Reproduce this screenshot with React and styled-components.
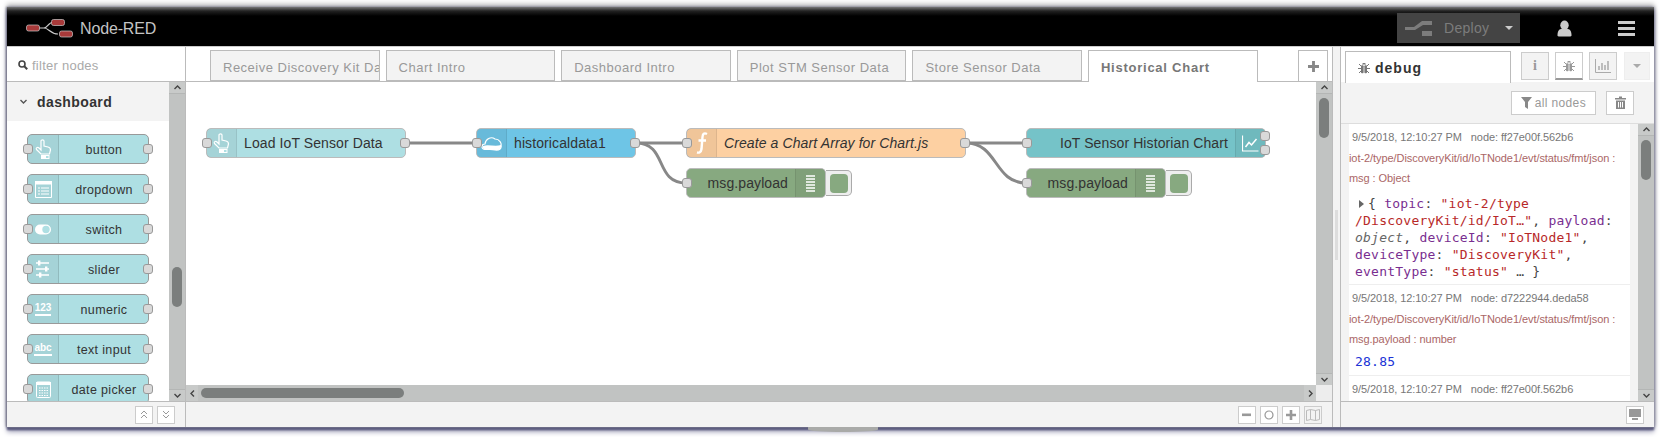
import React from 'react'
import styled, { createGlobalStyle } from 'styled-components'

const Global = createGlobalStyle`
  html, body { margin: 0; padding: 0; background: #fff; }
  body { font-family: "Liberation Sans", Arial, sans-serif; overflow: hidden; }
  * { box-sizing: border-box; }
`

const Page = styled.div`
  width: 1661px;
  height: 437px;
  padding: 7px 7px 10px 7px;
  overflow: hidden;
`
const Win = styled.div`
  width: 1647px;
  height: 420px;
  display: flex;
  flex-direction: column;
  background: #fff;
  box-shadow: -1px 0 2px #77778a, 1px 0 3px #9a9aa8, 0 3px 2px #4a4a72, 0 5px 5px #a5a5bc, 0 -3px 5px #bbb;
  position: relative;
`
const Dock = styled.div`
  position: absolute;
  left: 801px;
  top: 420px;
  width: 70px;
  height: 5px;
  background: #a9aaa8;
  border-radius: 0 0 50% 50%;
`
const Header = styled.div`
  height: 40px;
  flex: none;
  background: linear-gradient(#777 0, #222 4px, #000 9px);
  display: flex;
  align-items: center;
  padding-left: 19px;
  border-bottom: 1px solid #000;
`
const LogoBlock = styled.div`
  display: flex;
  align-items: center;
  margin-top: 4px;
`
const LogoText = styled.span`
  color: #c4c4c4;
  font-size: 16px;
  margin-left: 7px;
  letter-spacing: -0.15px;
`
const HeaderRight = styled.div`
  margin-left: auto;
  display: flex;
  align-items: center;
  height: 100%;
`
const DeployBtn = styled.div`
  width: 123px;
  height: 30px;
  margin-top: 2px;
  background: #444;
  display: flex;
  align-items: center;
  padding-left: 8px;
  color: #7c7c7c;
  font-size: 14px;
  letter-spacing: 0.3px;
`
const DeployLabel = styled.span`
  margin-left: 11px;
`
const Caret = styled.span`
  width: 0;
  height: 0;
  margin-left: ${p => (p.flush ? 0 : 16)}px;
  border-left: 4px solid transparent;
  border-right: 4px solid transparent;
  border-top: 4px solid ${p => p.color || '#ccc'};
`
const HeaderIcon = styled.div`
  width: ${p => p.w}px;
  margin-left: ${p => p.gap}px;
  margin-right: ${p => p.end || 0}px;
  margin-top: 3px;
  display: flex;
`

const Body = styled.div`
  flex: 1;
  min-height: 0;
  display: flex;
  border-top: 1px solid #ccc;
  margin-top: -1px;
`

/* palette */
const Palette = styled.div`
  width: 179px;
  flex: none;
  display: flex;
  flex-direction: column;
  border-right: 1px solid #bbb;
`
const Filter = styled.div`
  height: 35px;
  flex: none;
  display: flex;
  align-items: center;
  padding: 2px 0 0 11px;
  border-bottom: 1px solid #bbb;
  color: #aaa;
  font-size: 13px;
  letter-spacing: 0.25px;
  gap: 4px;
`
const PaletteMain = styled.div`
  flex: 1;
  min-height: 0;
  display: flex;
`
const PaletteList = styled.div`
  flex: 1;
  overflow: hidden;
`
const Category = styled.div`
  height: 39px;
  background: #f3f3f3;
  display: flex;
  align-items: center;
  padding-left: 12px;
  gap: 9px;
  color: #333;
  font-size: 14px;
  font-weight: bold;
  letter-spacing: 0.4px;
`
const PaletteNodes = styled.div`
  display: flex;
  flex-direction: column;
  gap: 10px;
  padding: 13px 0 0 20px;
`
const PNode = styled.div`
  width: 122px;
  height: 30px;
  flex: none;
  position: relative;
  background: #aedfe3;
  border: 1px solid #999;
  border-radius: 5px;
  display: flex;
  align-items: center;
  color: #333;
  font-size: 12.5px;
  letter-spacing: 0.35px;
`
const PIcon = styled.div`
  width: 31px;
  height: 100%;
  flex: none;
  background: rgba(0, 0, 0, 0.05);
  border-right: 1px solid rgba(0, 0, 0, 0.12);
  border-radius: 4px 0 0 4px;
  display: flex;
  align-items: center;
  justify-content: center;
`
const PLabel = styled.span`
  flex: 1;
  text-align: center;
  padding: 1px 0 0 1px;
`
const Port = styled.span`
  position: absolute;
  width: 10px;
  height: 10px;
  top: ${p => (p.top !== undefined ? p.top : 9)}px;
  ${p => (p.side === 'left' ? 'left: -5px;' : 'right: -5px;')}
  background: #d9d9d9;
  border: 1px solid #999;
  border-radius: 3px;
`
const Footer = styled.div`
  height: 26px;
  flex: none;
  background: #f3f3f3;
  border-top: 1px solid #bbb;
  display: flex;
  align-items: center;
  justify-content: flex-end;
  gap: 4px;
  padding-right: ${p => p.right || 0}px;
`
const FootBtn = styled.div`
  width: 18px;
  height: 18px;
  background: ${p => (p.muted ? '#f3f3f3' : '#fff')};
  border: 1px solid #ccc;
  display: flex;
  align-items: center;
  justify-content: center;
  color: #999;
`

/* scrollbars */
const VBar = styled.div`
  width: 16px;
  flex: none;
  background: #c1c3c2;
  display: flex;
  flex-direction: column;
  align-items: center;
  justify-content: space-between;
  position: relative;
`
const BarBtn = styled.div`
  width: 100%;
  height: 12px;
  flex: none;
  background: #c8cac9;
  display: flex;
  align-items: center;
  justify-content: center;
  border-bottom: ${p => (p.up ? '1px solid #b4b6b5' : 'none')};
  border-top: ${p => (p.up ? 'none' : '1px solid #b4b6b5')};
`
const VThumb = styled.div`
  position: absolute;
  left: 3px;
  top: ${p => p.top}px;
  width: 10px;
  height: ${p => p.h}px;
  background: #7b7e7d;
  border-radius: 5px;
`
const HBar = styled.div`
  height: 16px;
  flex: none;
  background: #c1c3c2;
  display: flex;
  justify-content: space-between;
  position: relative;
`
const HBarEnd = styled.div`
  display: flex;
  height: 100%;
`
const HBtn = styled.div`
  width: 12px;
  height: 100%;
  background: #c8cac9;
  display: flex;
  align-items: center;
  justify-content: center;
`
const HThumb = styled.div`
  position: absolute;
  left: 15px;
  top: 3px;
  width: 203px;
  height: 10px;
  background: #7b7e7d;
  border-radius: 5px;
`
const Corner = styled.div`
  width: 16px;
  flex: none;
  background: #ededed;
`

/* workspace */
const Workspace = styled.div`
  width: 1146px;
  flex: none;
  display: flex;
  flex-direction: column;
`
const Tabs = styled.div`
  height: 35px;
  flex: none;
  display: flex;
  align-items: flex-end;
  padding-left: 24px;
  gap: 6px;
  border-bottom: 1px solid #bbb;
  position: relative;
`
const Tab = styled.div`
  width: 169.6px;
  flex: none;
  height: ${p => (p.active ? 32 : 31)}px;
  margin-bottom: ${p => (p.active ? -1 : 0)}px;
  background: ${p => (p.active ? '#fff' : '#f3f3f3')};
  border: 1px solid #bbb;
  border-bottom: ${p => (p.active ? 'none' : '1px solid #bbb')};
  color: ${p => (p.active ? '#777' : '#999')};
  font-weight: ${p => (p.active ? 'bold' : 'normal')};
  font-size: 13px;
  letter-spacing: ${p => (p.active ? 0.75 : 0.5)}px;
  padding: 9px 0 0 12px;
  white-space: nowrap;
  overflow: hidden;
  z-index: 1;
`
const AddTab = styled.div`
  width: 30px;
  height: 31px;
  margin-left: auto;
  margin-right: 4px;
  border: 1px solid #bbb;
  border-bottom: none;
  background: #fff;
  display: flex;
  align-items: center;
  justify-content: center;
  color: #888;
`
const CanvasRow = styled.div`
  flex: 1;
  min-height: 0;
  display: flex;
`
const Canvas = styled.div`
  flex: 1;
  position: relative;
  background: #fff;
`
const Wires = styled.svg`
  position: absolute;
  left: 0;
  top: 0;
`
const FlowNode = styled.div`
  position: absolute;
  left: ${p => p.x}px;
  top: ${p => p.y}px;
  width: ${p => p.w}px;
  height: 30px;
  background: ${p => p.bg};
  border: 1px solid #bbb;
  border-radius: 5px;
  display: flex;
  flex-direction: ${p => (p.flip ? 'row-reverse' : 'row')};
  align-items: center;
  color: #333;
  font-size: 14px;
  letter-spacing: 0.1px;
  font-style: ${p => (p.italic ? 'italic' : 'normal')};
`
const NodeIcon = styled.div`
  width: 30px;
  height: 100%;
  flex: none;
  background: rgba(0, 0, 0, 0.05);
  border-${p => (p.flip ? 'left' : 'right')}: 1px solid rgba(0, 0, 0, 0.08);
  display: flex;
  align-items: center;
  justify-content: center;
`
const NodeLabel = styled.span`
  flex: 1;
  padding: 0 7px;
  white-space: nowrap;
  text-align: ${p => (p.right ? 'right' : 'left')};
`
const DebugToggle = styled.div`
  position: absolute;
  left: ${p => p.x}px;
  top: ${p => p.y}px;
  width: 26px;
  height: 26px;
  background: #eee;
  border: 1px solid #aaa;
  border-left: none;
  border-radius: 0 5px 5px 0;
  display: flex;
  align-items: center;
  padding-left: 4px;
`
const ToggleFill = styled.span`
  width: 18px;
  height: 19px;
  background: #87a980;
  border-radius: 4px;
`

/* separator */
const Separator = styled.div`
  width: 9px;
  flex: none;
  background: #f3f3f3;
  border-right: 1px solid #bbb;
  border-left: 1px solid #bbb;
  display: flex;
  align-items: center;
  justify-content: center;
`
const Grip = styled.div`
  width: 3px;
  height: 50px;
  background: #ddd;
  margin-bottom: 4px;
`

/* sidebar */
const Sidebar = styled.div`
  flex: 1;
  min-width: 0;
  display: flex;
  flex-direction: column;
`
const SideTabs = styled.div`
  height: 35px;
  flex: none;
  display: flex;
  align-items: flex-start;
  padding: 4px 0 0 4px;
  position: relative;
`
const SideTab = styled.div`
  width: 166px;
  height: 32px;
  border: 1px solid #bbb;
  border-bottom: none;
  display: flex;
  align-items: center;
  padding-left: 12px;
  gap: 5px;
  color: #333;
  font-size: 14px;
  font-weight: bold;
  letter-spacing: 1px;
  background: #fff;
`
const SideBtn = styled.div`
  width: ${p => p.w || 28}px;
  height: 28px;
  margin-left: ${p => p.gap || 6}px;
  margin-top: 1px;
  background: ${p => (p.active ? '#fff' : '#f3f3f3')};
  border: 1px solid ${p => (p.plain ? '#eee' : '#ccc')};
  border-bottom: ${p => (p.active ? '2px solid #999' : '')};
  display: flex;
  align-items: center;
  justify-content: center;
  color: #999;
  font-family: "Liberation Serif", serif;
  font-weight: bold;
  font-size: 14px;
`
const DebugBar = styled.div`
  height: 42px;
  flex: none;
  background: #f3f3f3;
  border-bottom: 1px solid #ddd;
  display: flex;
  justify-content: flex-end;
  align-items: center;
  gap: 10px;
  padding: 0 20px 0 0;
`
const BarButton = styled.div`
  height: 24px;
  padding: 0 ${p => p.pad || 9}px;
  background: #fff;
  border: 1px solid #ccc;
  display: flex;
  align-items: center;
  gap: 3px;
  color: #999;
  font-size: 12px;
  letter-spacing: 0.35px;
`
const DebugMain = styled.div`
  flex: 1;
  min-height: 0;
  display: flex;
`
const MsgPane = styled.div`
  flex: 1;
  background: #f3f3f3;
  padding: 0 8px;
  overflow: hidden;
`
const Msg = styled.div`
  background: #fff;
  border-bottom: 1px solid #eee;
  height: ${p => p.h}px;
  padding-top: 3px;
  font-size: 11px;
  line-height: 20px;
  overflow: hidden;
`
const MsgMeta = styled.div`
  color: #777;
  padding-left: 3px;
  white-space: pre;
  line-height: 21px;
  letter-spacing: -0.07px;
`
const MsgTopic = styled.div`
  color: #a66;
  white-space: nowrap;
  letter-spacing: -0.07px;
`
const Payload = styled.div`
  font-family: "DejaVu Sans Mono", monospace;
  font-size: 13px;
  line-height: 17px;
  letter-spacing: 0.23px;
  color: #444;
  margin-top: 7px;
  padding-left: 6px;
  white-space: pre;
`
const Num = styled.div`
  font-family: "DejaVu Sans Mono", monospace;
  font-size: 13px;
  line-height: 17px;
  letter-spacing: 0.23px;
  color: #2033d6;
  margin-top: 4px;
  padding-left: 6px;
`
const K = styled.span`color: #792e90;`
const S = styled.span`color: #b72828;`
const Em = styled.span`font-style: italic; color: #666;`
const Tri = styled.span`
  display: inline-block;
  margin: 0 4px 0 4px;
  border-left: 5px solid #666;
  border-top: 4px solid transparent;
  border-bottom: 4px solid transparent;
`

/* icons */
const Chev = ({ dir = 'up', c = '#444', s = 9 }) => {
  const pts = {
    up: '1.5,6 4.5,3 7.5,6',
    down: '1.5,3 4.5,6 7.5,3',
    left: '6,1.5 3,4.5 6,7.5',
    right: '3,1.5 6,4.5 3,7.5',
  }[dir]
  return (
    <svg width={s} height={s} viewBox="0 0 9 9">
      <polyline points={pts} fill="none" stroke={c} strokeWidth="1.4" />
    </svg>
  )
}
const Logo = () => (
  <svg width="47" height="20" viewBox="0 0 47 20">
    <path d="M13 9 H18 C22 9 22 3 28 3 M18 9 C23 9 24 15 32 15" fill="none" stroke="#ccc" strokeWidth="1.2" />
    <rect x="0.5" y="6" width="13" height="6" rx="2" fill="#a83a3a" stroke="#ccc" strokeWidth="0.7" />
    <rect x="25.5" y="0.5" width="13" height="6" rx="2" fill="#a83a3a" stroke="#ccc" strokeWidth="0.7" />
    <rect x="33.5" y="12" width="13" height="6" rx="2" fill="#a83a3a" stroke="#ccc" strokeWidth="0.7" />
  </svg>
)
const DeployIcon = () => (
  <svg width="28" height="20" viewBox="0 0 28 20">
    <path d="M0 9 H9 L17 3 H27 V7 H18 L10 12 H0 Z" fill="#7c7c7c" />
    <rect x="17" y="13" width="10" height="5" fill="#7c7c7c" />
  </svg>
)
const User = () => (
  <svg width="15" height="17" viewBox="0 0 16 17">
    <ellipse cx="8" cy="5" rx="4.5" ry="5" fill="#ccc" />
    <path d="M0.5 16 C0.5 10 3 9 5 9 H11 C13 9 15.5 10 15.5 16 C15.5 17 14 17 14 17 H2 C2 17 0.5 17 0.5 16 Z" fill="#ccc" />
  </svg>
)
const Burger = () => (
  <svg width="17" height="15" viewBox="0 0 17 15">
    <rect width="17" height="3" fill="#ccc" />
    <rect y="6" width="17" height="3" fill="#ccc" />
    <rect y="12" width="17" height="3" fill="#ccc" />
  </svg>
)
const Search = () => (
  <svg width="10" height="10" viewBox="0 0 10 10">
    <circle cx="4" cy="4" r="3" fill="none" stroke="#444" strokeWidth="1.6" />
    <line x1="6.3" y1="6.3" x2="9.2" y2="9.2" stroke="#444" strokeWidth="2" />
  </svg>
)
const Bug = ({ c = '#999' }) => (
  <svg width="12" height="12" viewBox="0 0 12 12">
    <path d="M4 2.5 C4 0.5 8 0.5 8 2.5 Z" fill={c} />
    <rect x="3" y="3.2" width="2.6" height="8" rx="1" fill={c} />
    <rect x="6.4" y="3.2" width="2.6" height="8" rx="1" fill={c} />
    <path d="M1 2 L3 4 M11 2 L9 4 M0 6.5 H3 M12 6.5 H9 M1 11 L3 9 M11 11 L9 9" stroke={c} strokeWidth="1" />
  </svg>
)
const BarsIcon = () => (
  <svg width="16" height="14" viewBox="0 0 16 14">
    <path d="M0.5 0 V13.5 H16" fill="none" stroke="#aaa" />
    <path d="M4 11 V7 M7 11 V4 M10 11 V6 M13 11 V2" stroke="#aaa" strokeWidth="1.5" />
  </svg>
)
const Funnel = () => (
  <svg width="11" height="12" viewBox="0 0 11 12">
    <path d="M0 0 H11 L7 5 V12 L4 10 V5 Z" fill="#888" />
  </svg>
)
const Trash = ({ c = '#888' }) => (
  <svg width="11" height="13" viewBox="0 0 11 13">
    <path d="M4 0.5 H7 V2 H11 V3.5 H0 V2 H4 Z" fill={c} />
    <path d="M1 4.5 H10 V13 H1 Z M3 6 V11.5 H4 V6 Z M5 6 V11.5 H6 V6 Z M7 6 V11.5 H8 V6 Z" fill={c} fillRule="evenodd" />
  </svg>
)
const Minus = () => (
  <svg width="10" height="10" viewBox="0 0 10 10"><rect y="3.5" width="9" height="2.6" fill="#999" /></svg>
)
const Plus = ({ c = '#999', s = 10 }) => (
  <svg width={s} height={s} viewBox="0 0 10 10">
    <path d="M3.7 0 H6.3 V3.7 H10 V6.3 H6.3 V10 H3.7 V6.3 H0 V3.7 H3.7 Z" fill={c} />
  </svg>
)
const Ring = () => (
  <svg width="10" height="10" viewBox="0 0 10 10"><circle cx="5" cy="5" r="4" fill="none" stroke="#999" strokeWidth="1.2" /></svg>
)
const MapIcon = () => (
  <svg width="14" height="12" viewBox="0 0 14 12">
    <path d="M0.5 1.5 L4.5 0.5 L9.5 1.5 L13.5 0.5 V10.5 L9.5 11.5 L4.5 10.5 L0.5 11.5 Z M4.5 0.5 V10.5 M9.5 1.5 V11.5" fill="none" stroke="#bbb" />
  </svg>
)
const Monitor = () => (
  <svg width="12" height="12" viewBox="0 0 12 12">
    <rect width="12" height="8" fill="#999" />
    <rect x="3" y="9" width="6" height="2" fill="#999" />
  </svg>
)
const Dbl = ({ up }) => (
  <svg width="8" height="9" viewBox="0 0 8 9">
    <path d={up ? 'M1 4 L4 1 L7 4 M1 8 L4 5 L7 8' : 'M1 1 L4 4 L7 1 M1 5 L4 8 L7 5'} fill="none" stroke="#999" />
  </svg>
)
const Hand = () => (
  <svg width="17" height="21" viewBox="0 0 17 21">
    <path d="M6 9 V2 C6 0.5 9 0.5 9 2 V7 L13 8 C15 8.5 15.5 9.5 15.5 11 L14.5 15 H6 L1.5 10.5 C0.5 9 2.5 7.5 4 9 L6 11 Z" fill="none" stroke="#fff" strokeWidth="1.2" />
    <path d="M6 16 H14.5 V20 H6 Z" fill="#fff" />
    <rect x="11" y="17" width="2.5" height="2" fill="#aedfe3" />
  </svg>
)
const ListBox = () => (
  <svg width="17" height="17" viewBox="0 0 17 17">
    <path d="M0.5 0.5 H16.5 V16.5 H0.5 Z" fill="none" stroke="#fff" />
    <rect x="0" y="0" width="17" height="3.5" fill="#fff" />
    <path d="M3 7 H5 M6 7 H14 M3 10 H5 M6 10 H14 M3 13 H5 M6 13 H14" stroke="#fff" />
  </svg>
)
const SwitchIcon = () => (
  <svg width="17" height="11" viewBox="0 0 17 11">
    <rect x="0" y="0.5" width="16" height="10" rx="5" fill="#fff" />
    <circle cx="11" cy="5.5" r="3.7" fill="#aedfe3" />
  </svg>
)
const Sliders = () => (
  <svg width="14" height="18" viewBox="0 0 14 18">
    <path d="M0 3 H13 M0 9 H13 M0 15 H13" stroke="#fff" strokeWidth="1.6" />
    <rect x="2" y="0.5" width="2.4" height="5" fill="#fff" />
    <rect x="9" y="6.5" width="2.4" height="5" fill="#fff" />
    <rect x="3" y="12.5" width="2.4" height="5" fill="#fff" />
  </svg>
)
const IconText = styled.span`
  color: #fff;
  font-size: 10px;
  font-weight: bold;
  font-style: normal;
  letter-spacing: 0;
  border-bottom: 2px solid #fff;
  line-height: 11px;
  padding-bottom: 1px;
`
const Calendar = () => (
  <svg width="15" height="17" viewBox="0 0 15 17">
    <rect x="0.5" y="1" width="14" height="15.5" rx="1" fill="none" stroke="#fff" />
    <rect x="0" y="1" width="15" height="3" fill="#fff" />
    <path d="M3 7 H12 M3 9.5 H12 M3 12 H12 M3 14.5 H12" stroke="#fff" strokeDasharray="1.5 1" />
  </svg>
)
const Cloud = () => (
  <svg width="21" height="15" viewBox="0 0 21 15">
    <path d="M4 13.5 C0 13.5 0 8 4 8 C4.5 3 10 0 14 3 C19 3 20.5 8 20 9 C21 13 18 14.5 14 14 C11 13 8 13.5 4 13.5 Z" fill="none" stroke="#fff" strokeWidth="1.2" />
    <path d="M2 10 C7 8 14 11 20 9 C20.5 13 18 14.5 14 14 C11 13 8 13.5 4 13.5 C2.5 13.5 1.5 12 2 10 Z" fill="#fff" />
  </svg>
)
const FuncIcon = () => (
  <svg width="12" height="22" viewBox="0 0 12 22">
    <path d="M11 2 C8 0.5 6.8 2 6.5 5 L5.5 17 C5 20.5 3 21 1 20.5 M2.5 8.5 H10" fill="none" stroke="#fff" strokeWidth="2.4" />
  </svg>
)
const DebugLines = () => (
  <svg width="11" height="17" viewBox="0 0 11 17">
    <path d="M1 1 H10 M1 4 H10 M1 7 H10 M1 10 H10 M1 13 H10 M1 16 H10" stroke="#fff" strokeWidth="1.3" />
  </svg>
)
const ChartIcon = () => (
  <svg width="17" height="17" viewBox="0 0 17 17">
    <path d="M0.5 0.5 V16 H16.5" fill="none" stroke="#fff" strokeWidth="1.2" />
    <path d="M3.5 12 L7 7.5 L9.5 10 L14.5 4" fill="none" stroke="#fff" strokeWidth="1.5" />
  </svg>
)

const paletteNodes = [
  { label: 'button', icon: <Hand /> },
  { label: 'dropdown', icon: <ListBox /> },
  { label: 'switch', icon: <SwitchIcon /> },
  { label: 'slider', icon: <Sliders /> },
  { label: 'numeric', icon: <IconText>123</IconText> },
  { label: 'text input', icon: <IconText>abc</IconText> },
  { label: 'date picker', icon: <Calendar /> },
]

const tabs = ['Receive Discovery Kit Data', 'Chart Intro', 'Dashboard Intro', 'Plot STM Sensor Data', 'Store Sensor Data']

const App = () => {
  return (
    <Page>
      <Global />
      <Win>
        <Header>
          <LogoBlock>
            <Logo />
            <LogoText>Node-RED</LogoText>
          </LogoBlock>
          <HeaderRight>
            <DeployBtn>
              <DeployIcon />
              <DeployLabel>Deploy</DeployLabel>
              <Caret />
            </DeployBtn>
            <HeaderIcon gap={37} w={15}><User /></HeaderIcon>
            <HeaderIcon gap={46} w={17} end={19}><Burger /></HeaderIcon>
          </HeaderRight>
        </Header>
        <Body>
          <Palette>
            <Filter><Search /> filter nodes</Filter>
            <PaletteMain>
              <PaletteList>
                <Category><Chev dir="down" c="#555" />dashboard</Category>
                <PaletteNodes>
                  {paletteNodes.map(n => (
                    <PNode key={n.label}>
                      <Port side="left" />
                      <PIcon>{n.icon}</PIcon>
                      <PLabel>{n.label}</PLabel>
                      <Port side="right" />
                    </PNode>
                  ))}
                </PaletteNodes>
              </PaletteList>
              <VBar>
                <BarBtn up><Chev /></BarBtn>
                <VThumb top={185} h={40} />
                <BarBtn><Chev dir="down" /></BarBtn>
              </VBar>
            </PaletteMain>
            <Footer right={10}>
              <FootBtn><Dbl up /></FootBtn>
              <FootBtn><Dbl /></FootBtn>
            </Footer>
          </Palette>
          <Workspace>
            <Tabs>
              {tabs.map(t => <Tab key={t}>{t}</Tab>)}
              <Tab active>Historical Chart</Tab>
              <AddTab><Plus c="#888" s={11} /></AddTab>
            </Tabs>
            <CanvasRow>
              <Canvas>
                <Wires width="1130" height="303" viewBox="0 0 1130 303">
                  <g fill="none" stroke="#888" strokeWidth="3">
                    <path d="M220 61 H290" />
                    <path d="M450 61 H500" />
                    <path d="M450 61 C482 61 468 101 500 101" />
                    <path d="M780 61 H840" />
                    <path d="M780 61 C812 61 808 101 840 101" />
                  </g>
                </Wires>
                <FlowNode x={20} y={46} w={200} bg="#aedfe3">
                  <Port side="left" />
                  <NodeIcon><Hand /></NodeIcon>
                  <NodeLabel>Load IoT Sensor Data</NodeLabel>
                  <Port side="right" />
                </FlowNode>
                <FlowNode x={290} y={46} w={160} bg="#6ec5e6">
                  <Port side="left" />
                  <NodeIcon><Cloud /></NodeIcon>
                  <NodeLabel>historicaldata1</NodeLabel>
                  <Port side="right" />
                </FlowNode>
                <FlowNode x={500} y={46} w={280} bg="#fdd0a2" italic>
                  <Port side="left" />
                  <NodeIcon><FuncIcon /></NodeIcon>
                  <NodeLabel>Create a Chart Array for Chart.js</NodeLabel>
                  <Port side="right" />
                </FlowNode>
                <FlowNode x={500} y={86} w={140} bg="#87a980" flip>
                  <Port side="left" />
                  <NodeIcon flip><DebugLines /></NodeIcon>
                  <NodeLabel right>msg.payload</NodeLabel>
                </FlowNode>
                <DebugToggle x={640} y={88}><ToggleFill /></DebugToggle>
                <FlowNode x={840} y={46} w={240} bg="#75c3c8" flip>
                  <Port side="left" />
                  <NodeIcon flip><ChartIcon /></NodeIcon>
                  <NodeLabel right>IoT Sensor Historian Chart</NodeLabel>
                  <Port side="right" top={2} />
                  <Port side="right" top={16} />
                </FlowNode>
                <FlowNode x={840} y={86} w={140} bg="#87a980" flip>
                  <Port side="left" />
                  <NodeIcon flip><DebugLines /></NodeIcon>
                  <NodeLabel right>msg.payload</NodeLabel>
                </FlowNode>
                <DebugToggle x={980} y={88}><ToggleFill /></DebugToggle>
              </Canvas>
              <VBar>
                <BarBtn up><Chev /></BarBtn>
                <VThumb top={16} h={40} />
                <BarBtn><Chev dir="down" /></BarBtn>
              </VBar>
            </CanvasRow>
            <HBar>
              <HBtn><Chev dir="left" /></HBtn>
              <HThumb />
              <HBarEnd>
                <HBtn><Chev dir="right" /></HBtn>
                <Corner />
              </HBarEnd>
            </HBar>
            <Footer right={10}>
              <FootBtn><Minus /></FootBtn>
              <FootBtn><Ring /></FootBtn>
              <FootBtn><Plus /></FootBtn>
              <FootBtn muted><MapIcon /></FootBtn>
            </Footer>
          </Workspace>
          <Separator><Grip /></Separator>
          <Sidebar>
            <SideTabs>
              <SideTab><Bug c="#777" />debug</SideTab>
              <SideBtn gap={10}>i</SideBtn>
              <SideBtn active><Bug /></SideBtn>
              <SideBtn><BarsIcon /></SideBtn>
              <SideBtn plain gap={7} w={26}><Caret color="#aaa" flush /></SideBtn>
            </SideTabs>
            <DebugBar>
              <BarButton><Funnel />all nodes</BarButton>
              <BarButton pad={7.5}><Trash /></BarButton>
            </DebugBar>
            <DebugMain>
              <MsgPane>
                <Msg h={161}>
                  <MsgMeta>9/5/2018, 12:10:27 PM   node: ff27e00f.562b6</MsgMeta>
                  <MsgTopic>iot-2/type/DiscoveryKit/id/IoTNode1/evt/status/fmt/json :</MsgTopic>
                  <MsgTopic>msg : Object</MsgTopic>
                  <Payload>
                    <Tri />{'{ '}<K>topic</K>: <S>"iot-2/type</S>{'\n'}
                    <S>/DiscoveryKit/id/IoT…"</S>, <K>payload</K>:{'\n'}
                    <Em>object</Em>, <K>deviceId</K>: <S>"IoTNode1"</S>,{'\n'}
                    <K>deviceType</K>: <S>"DiscoveryKit"</S>,{'\n'}
                    <K>eventType</K>: <S>"status"</S> … {'}'}
                  </Payload>
                </Msg>
                <Msg h={91}>
                  <MsgMeta>9/5/2018, 12:10:27 PM   node: d7222944.deda58</MsgMeta>
                  <MsgTopic>iot-2/type/DiscoveryKit/id/IoTNode1/evt/status/fmt/json :</MsgTopic>
                  <MsgTopic>msg.payload : number</MsgTopic>
                  <Num>28.85</Num>
                </Msg>
                <Msg h={30}>
                  <MsgMeta>9/5/2018, 12:10:27 PM   node: ff27e00f.562b6</MsgMeta>
                </Msg>
              </MsgPane>
              <VBar>
                <BarBtn up><Chev /></BarBtn>
                <VThumb top={16} h={40} />
                <BarBtn><Chev dir="down" /></BarBtn>
              </VBar>
            </DebugMain>
            <Footer right={10}>
              <FootBtn><Monitor /></FootBtn>
            </Footer>
          </Sidebar>
        </Body>
        <Dock />
      </Win>
    </Page>
  )
}

export default App
